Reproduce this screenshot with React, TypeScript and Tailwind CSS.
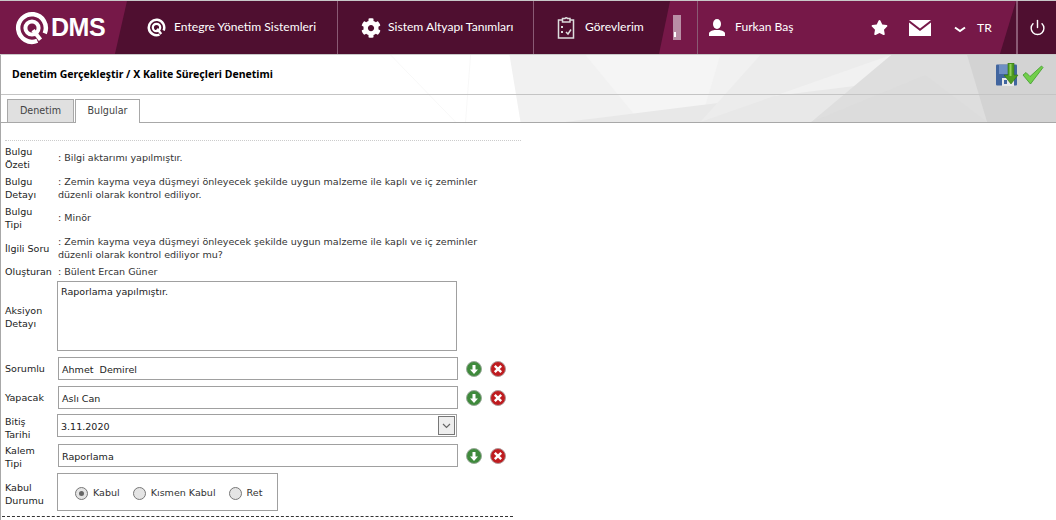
import React from 'react';
import { FaCog, FaStar } from 'react-icons/fa';
import { Power } from 'lucide-react';

const bodyFont = "font-['DejaVu_Sans',sans-serif]";
const navFont = "font-['Lato',sans-serif]";

function QRing({ size }: { size: number }) {
  return (
    <svg width={size} height={size} viewBox="0 0 32 32" fill="none" stroke="#fff">
      <path d="M21 28A13 13 0 1 1 28 21" strokeWidth="4.2" />
      <circle cx="16" cy="16" r="6.2" strokeWidth="3.8" />
      <path d="M17 18 L24 27" strokeWidth="3.8" />
    </svg>
  );
}

function TasksIcon() {
  return (
    <svg width="20" height="24" viewBox="0 0 20 24" fill="none" stroke="#ddd" strokeWidth="1.5">
      <path d="M5 4H1.500v18h15V4H13" />
      <path d="M5.500 6V2.500H8a1.500 1.500 0 0 1 2.500 0H13V6z" />
      <path d="M5 10v2M5 15v2" strokeWidth="2" />
      <path d="M9 16l2 2 3-4.500" />
    </svg>
  );
}

function UserIcon() {
  return (
    <svg width="16" height="17" viewBox="0 0 16 17" fill="#fff">
      <ellipse cx="8" cy="5" rx="4" ry="5" />
      <path d="M0 17v-2.500c0-2 3-3 5.500-3.500h5c2.500.5 5.500 1.500 5.500 3.500V17z" />
    </svg>
  );
}

function MailIcon() {
  return (
    <svg width="22" height="16" viewBox="0 0 22 16">
      <path d="M0 0h22L11 8.500z" fill="#fff" />
      <path d="M0 2.500l11 8.500 11-8.500V16H0z" fill="#fff" />
    </svg>
  );
}

function NavItem({ icon, label, className, iconClass }: { icon: React.ReactNode; label: string; className: string; iconClass: string }) {
  return (
    <div className={`flex h-full items-center border-r border-[#8a5a74] ${className}`}>
      <div className={`flex shrink-0 ${iconClass}`}>{icon}</div>
      <span className="text-[12.1px] text-white">{label}</span>
    </div>
  );
}

function Header() {
  return (
    <div className={`relative flex h-[55px] border-b border-t border-[#c8c8c8] bg-[#4f0f30] ${navFont}`}>
      <div className="absolute inset-y-0 left-0 w-[127px] bg-[#761848] [clip-path:polygon(0_0,100%_0,90.5%_100%,0_100%)]" />
      <div className="absolute inset-y-0 left-[659px] w-[357px] bg-[#761848] [clip-path:polygon(3.1%_0,100%_0,95.5%_100%,0_100%)]" />
      <div className="relative flex w-[128px] items-center pl-[15px]">
        <QRing size={34} />
        <span className="ml-[2px] font-['Liberation_Sans',sans-serif] text-[25px] font-bold tracking-[-0.5px] text-white">DMS</span>
      </div>
      <NavItem className="relative w-[210px] pl-[19px]" iconClass="w-[27px]" icon={<QRing size={19} />} label="Entegre Yönetim Sistemleri" />
      <NavItem className="relative w-[196px] pl-[23px]" iconClass="w-[27px]" icon={<FaCog size={20} color="#fff" />} label="Sistem Altyapı Tanımları" />
      <div className="relative flex h-full w-[164px] items-center border-r border-[#8a5a74] pl-[23px]">
        <div className="flex w-[28px] shrink-0"><TasksIcon /></div>
        <span className="text-[12.1px] text-white">Görevlerim</span>
        <div className="ml-[29px] flex h-[25px] w-[8px] items-end bg-[#b98ea5] pb-[3px] pl-[1px]">
          <div className="h-[5px] w-[2px] bg-white" />
        </div>
      </div>
      <div className="relative flex h-full w-[165px] items-center pl-[11px]">
        <div className="flex w-[26px]"><UserIcon /></div>
        <span className="text-[12.1px] text-white">Furkan Baş</span>
      </div>
      <div className="relative flex h-full w-[153px] items-center">
        <FaStar size={17} color="#fff" className="ml-[8px]" />
        <div className="ml-[21px]"><MailIcon /></div>
        <svg width="12" height="7" viewBox="0 0 12 7" fill="none" stroke="#fff" strokeWidth="2" className="ml-[23px] mt-[4px]">
          <path d="M1 1.500l5 3.500 5-3.500" />
        </svg>
        <span className="ml-[11px] mt-[2px] text-[12.1px] text-white">TR</span>
      </div>
      <div className="relative flex h-full flex-1 items-center justify-center border-l-2 border-[#8a5a74]">
        <Power size={17} color="#fff" strokeWidth={2} />
      </div>
    </div>
  );
}

function SaveIcon() {
  return (
    <svg width="24" height="24" viewBox="0 0 24 24">
      <rect x="1" y="1.500" width="21" height="21" rx="1" fill="#41659f" />
      <rect x="4" y="2" width="12" height="9" fill="#6f8fc4" />
      <rect x="7" y="15" width="12" height="8" fill="#e8e8e8" />
      <rect x="9" y="17" width="3" height="4" fill="#41659f" />
      <path d="M13 0h6v12h4l-7 9-7-9h4z" fill="#4f9a20" stroke="#2f7310" strokeWidth="0.600" />
      <path d="M14.500 1h2v12h-2z" fill="#8fd05a" />
    </svg>
  );
}

function CheckIcon() {
  return (
    <svg width="22" height="20" viewBox="0 0 22 20">
      <path d="M1 10l3-2.500 4 4L19.500 1 21 2.500 8.500 19z" fill="#72cf4c" stroke="#3f9a2a" strokeWidth="0.800" />
    </svg>
  );
}

// açık gri arka plan üçgenleri
function TitleBackdrop() {
  return (
    <svg className="absolute inset-0 h-full w-full" viewBox="0 0 1056 67" preserveAspectRatio="none">
      <path d="M509 0L520 67H1056V0z" fill="#f1f1f1" />
      <path d="M585 0L640 67H700L720 0z" fill="#f5f5f5" />
      <path d="M565 67L1056 6V67z" fill="#e8e8e8" />
      <path d="M891 0L811 67H1056V0z" fill="#dedede" />
      <path d="M967 0L987 67H1056V0z" fill="#d3d3d3" />
      <path d="M700 67L891 0H760z" fill="#ececec" />
      <path d="M811 67L925 20 987 67z" fill="#dcdcdc" />
      <path d="M390 0L455 67M470 0L465 67" stroke="#f8f8f8" fill="none" />
    </svg>
  );
}

function TitleBar() {
  return (
    <div className="relative h-[68px] border-b border-[#a8a8a8]">
      <TitleBackdrop />
      <div className="relative flex h-[40px] items-center justify-between border-b border-[#c4c4c4] pl-[11px] pr-[12px]">
        <span className="font-['Noto_Sans',sans-serif] text-[10.5px] font-bold text-black">Denetim Gerçekleştir / X Kalite Süreçleri Denetimi</span>
        <div className="flex items-center gap-[3px]">
          <SaveIcon />
          <CheckIcon />
        </div>
      </div>
      <div className={`relative flex h-[27px] items-end gap-[1px] pl-[6px] text-[9.6px] ${bodyFont}`}>
        <div className="-mb-px flex h-[24px] w-[67px] items-center justify-center border border-[#a8a8a8] bg-[#e0e0e0] text-[#444]">Denetim</div>
        <div className="-mb-px flex h-[24px] w-[65px] items-center justify-center border border-b-0 border-[#a8a8a8] bg-white text-[#444]">Bulgular</div>
      </div>
    </div>
  );
}

function Row({ label, h, labelClass, children }: { label: string; h: string; labelClass?: string; children: React.ReactNode }) {
  return (
    <div className={`flex items-center ${h}`}>
      <div className={`w-[52px] shrink-0 whitespace-pre-line leading-[13px] text-[#222] ${labelClass ?? ''}`}>{label}</div>
      <div className="min-w-0 flex-1">{children}</div>
    </div>
  );
}

function Value({ children, className }: { children: React.ReactNode; className?: string }) {
  return <div className={`ml-px w-[430px] leading-[13px] text-[#333] ${className ?? ''}`}>{children}</div>;
}

function DownBtn() {
  return (
    <svg width="16" height="16" viewBox="0 0 16 16">
      <circle cx="8" cy="8" r="7.500" fill="#3f8a3c" stroke="#9aaa9a" />
      <path d="M8 13l-4-4.500h2.500V4h3v4.500H12z" fill="#fff" />
    </svg>
  );
}

function RemoveBtn() {
  return (
    <svg width="16" height="16" viewBox="0 0 16 16">
      <circle cx="8" cy="8" r="7.500" fill="#bf1c20" stroke="#b09a9a" />
      <path d="M4.800 4.800l6.400 6.400M11.200 4.800l-6.400 6.400" stroke="#fff" strokeWidth="2.400" />
    </svg>
  );
}

function TextInput({ value, actions }: { value: string; actions?: boolean }) {
  return (
    <div className="ml-px flex items-center">
      <div className="flex h-[23px] w-[400px] items-center whitespace-pre border border-[#a0a0a0] bg-white pl-[3px] pt-[3px] text-[#222]">{value}</div>
      {actions && (
        <div className="ml-[8px] flex gap-[8px]">
          <DownBtn />
          <RemoveBtn />
        </div>
      )}
    </div>
  );
}

function Radio({ label, checked }: { label: string; checked?: boolean }) {
  return (
    <div className="flex items-center gap-[5px]">
      <div className="flex h-[13px] w-[13px] items-center justify-center rounded-full border border-[#777] bg-[#e4e4e4]">
        {checked && <div className="h-[5px] w-[5px] rounded-full bg-[#666]" />}
      </div>
      <span className="text-[#333]">{label}</span>
    </div>
  );
}

export default function App() {
  return (
    <div className="h-[520px] w-[1056px] overflow-hidden bg-white">
      <Header />
      <div className="h-[465px] border-l border-[#a8a8a8]">
        <TitleBar />
        <div className={`w-[520px] pl-[4px] pt-[17px] text-[9.55px] ${bodyFont}`}>
          <div className="border-t border-dotted border-[#ccc] pt-[2px]">
            <Row label={'Bulgu\nÖzeti'} h="h-[30px]"><Value className="pb-[2px]">: Bilgi aktarımı yapılmıştır.</Value></Row>
            <Row label={'Bulgu\nDetayı'} h="h-[30px]"><Value>: Zemin kayma veya düşmeyi önleyecek şekilde uygun malzeme ile kaplı ve iç zeminler düzenli olarak kontrol ediliyor.</Value></Row>
            <Row label={'Bulgu\nTipi'} h="h-[30px]"><Value className="pb-[2px]">: Minör</Value></Row>
            <Row label="İlgili Soru" h="h-[30px]"><Value>: Zemin kayma veya düşmeyi önleyecek şekilde uygun malzeme ile kaplı ve iç zeminler düzenli olarak kontrol ediliyor mu?</Value></Row>
            <Row label="Oluşturan" h="h-[17px]"><Value>: Bülent Ercan Güner</Value></Row>
            <Row label={'Aksiyon\nDetayı'} h="h-[72px]" labelClass="pt-[2px]">
              <div className="h-[70px] w-[400px] border border-[#a0a0a0] bg-white pl-[3px] pt-[3px] text-[#222]">Raporlama yapılmıştır.</div>
            </Row>
            <div className="mt-[5px]">
              <Row label="Sorumlu" h="h-[23px]"><TextInput value="Ahmet  Demirel" actions /></Row>
            </div>
            <div className="mt-[6px]">
              <Row label="Yapacak" h="h-[23px]"><TextInput value="Aslı Can" actions /></Row>
            </div>
            <div className="mt-[5px]">
              <Row label={'Bitiş\nTarihi'} h="h-[23px]" labelClass="pt-[4px]">
                <div className="flex h-[23px] w-[400px] items-center justify-between border border-[#a0a0a0] bg-white pl-[3px] pr-px text-[#222]">
                  <span className="pt-[3px]">3.11.2020</span>
                  <div className="flex h-[19px] w-[17px] items-center justify-center border border-[#777] bg-[#eee]">
                    <svg width="9" height="6" viewBox="0 0 9 6" fill="none" stroke="#666" strokeWidth="1.200"><path d="M1 1l3.500 3.500L8 1" /></svg>
                  </div>
                </div>
              </Row>
            </div>
            <div className="mt-[7px]">
              <Row label={'Kalem\nTipi'} h="h-[23px]" labelClass="pt-[2px]"><TextInput value="Raporlama" actions /></Row>
            </div>
            <div className="mt-[6px]">
              <Row label={'Kabul\nDurumu'} h="h-[38px]" labelClass="pt-[4px]">
                <div className="flex h-[38px] w-[221px] items-center gap-[13px] border border-[#a0a0a0] pl-[17px] pt-[3px]">
                  <Radio label="Kabul" checked />
                  <Radio label="Kısmen Kabul" />
                  <Radio label="Ret" />
                </div>
              </Row>
            </div>
          </div>
          <div className="ml-[-3px] mr-[8px] mt-[5px] border-t border-dashed border-[#333]" />
        </div>
      </div>
    </div>
  );
}
